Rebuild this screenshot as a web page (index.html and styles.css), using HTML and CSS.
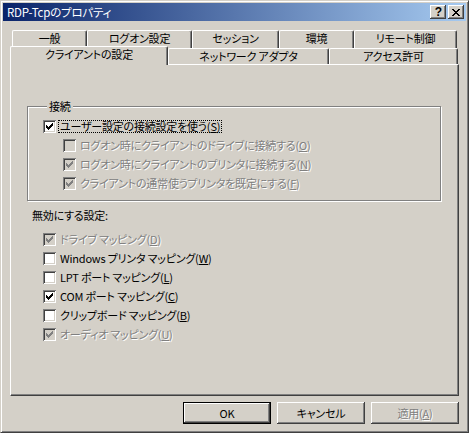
FILE: index.html
```html
<!DOCTYPE html>
<html lang="ja">
<head>
<meta charset="utf-8">
<title>RDP-Tcpのプロパティ</title>
<link rel="stylesheet" href="styles.css">
</head>
<body>
<div class="window">
  <div class="titlebar">
    <span class="title">RDP-Tcpのプロパティ</span>
    <span class="tbtn help">?</span>
    <span class="tbtn close"><svg width="8" height="7" viewBox="0 0 8 7"><path d="M0 0h2v1H0zM6 0h2v1H6zM1 1h2v1H1zM5 1h2v1H5zM2 2h4v1H2zM3 3h2v1H3zM2 4h4v1H2zM1 5h2v1H1zM5 5h2v1H5zM0 6h2v1H0zM6 6h2v1H6z"/></svg></span>
  </div>
  <div class="content">
    <div class="tabrow row1">
      <div class="tab w-a">一般</div>
      <div class="tab w-b">ログオン設定</div>
      <div class="tab w-c">セッション</div>
      <div class="tab w-d">環境</div>
      <div class="tab w-e">リモート制御</div>
    </div>
    <div class="tabrow row2">
      <div class="tab sel w-f">クライアントの設定</div>
      <div class="tab w-g">ネットワーク アダプタ</div>
      <div class="tab w-h">アクセス許可</div>
    </div>
    <div class="panel">
      <fieldset class="group">
        <legend>接続</legend>
        <div class="rows first">
          <div class="row">
            <span class="cb"><svg class="ck" viewBox="0 0 13 13" width="13" height="13"><path d="M3 5h1v3H3zM4 6h1v3H4zM5 7h1v3H5zM6 6h1v3H6zM7 5h1v3H7zM8 4h1v3H8zM9 3h1v3H9z"/></svg></span>
            <span class="lbl focus">ユーザー設定の接続設定を使う(<u>S</u>)</span>
          </div>
          <div class="row sub">
            <span class="cb dis"></span>
            <span class="lbl dis">ログオン時にクライアントのドライブに接続する(<u>O</u>)</span>
          </div>
          <div class="row sub">
            <span class="cb dis"><svg class="ck" viewBox="0 0 13 13" width="13" height="13"><path d="M3 5h1v3H3zM4 6h1v3H4zM5 7h1v3H5zM6 6h1v3H6zM7 5h1v3H7zM8 4h1v3H8zM9 3h1v3H9z"/></svg></span>
            <span class="lbl dis">ログオン時にクライアントのプリンタに接続する(<u>N</u>)</span>
          </div>
          <div class="row sub">
            <span class="cb dis"><svg class="ck" viewBox="0 0 13 13" width="13" height="13"><path d="M3 5h1v3H3zM4 6h1v3H4zM5 7h1v3H5zM6 6h1v3H6zM7 5h1v3H7zM8 4h1v3H8zM9 3h1v3H9z"/></svg></span>
            <span class="lbl dis">クライアントの通常使うプリンタを既定にする(<u>F</u>)</span>
          </div>
        </div>
      </fieldset>
      <div class="heading">無効にする設定:</div>
      <div class="rows second">
        <div class="row">
          <span class="cb dis"><svg class="ck" viewBox="0 0 13 13" width="13" height="13"><path d="M3 5h1v3H3zM4 6h1v3H4zM5 7h1v3H5zM6 6h1v3H6zM7 5h1v3H7zM8 4h1v3H8zM9 3h1v3H9z"/></svg></span>
          <span class="lbl dis">ドライブ マッピング(<u>D</u>)</span>
        </div>
        <div class="row">
          <span class="cb"></span>
          <span class="lbl">Windows プリンタ マッピング(<u>W</u>)</span>
        </div>
        <div class="row">
          <span class="cb"></span>
          <span class="lbl">LPT ポート マッピング(<u>L</u>)</span>
        </div>
        <div class="row">
          <span class="cb"><svg class="ck" viewBox="0 0 13 13" width="13" height="13"><path d="M3 5h1v3H3zM4 6h1v3H4zM5 7h1v3H5zM6 6h1v3H6zM7 5h1v3H7zM8 4h1v3H8zM9 3h1v3H9z"/></svg></span>
          <span class="lbl">COM ポート マッピング(<u>C</u>)</span>
        </div>
        <div class="row">
          <span class="cb"></span>
          <span class="lbl">クリップボード マッピング(<u>B</u>)</span>
        </div>
        <div class="row">
          <span class="cb dis"><svg class="ck" viewBox="0 0 13 13" width="13" height="13"><path d="M3 5h1v3H3zM4 6h1v3H4zM5 7h1v3H5zM6 6h1v3H6zM7 5h1v3H7zM8 4h1v3H8zM9 3h1v3H9z"/></svg></span>
          <span class="lbl dis">オーディオ マッピング(<u>U</u>)</span>
        </div>
      </div>
    </div>
    <div class="buttons">
      <div class="btn default">OK</div>
      <div class="btn">キャンセル</div>
      <div class="btn dis">適用(<u>A</u>)</div>
    </div>
  </div>
</div>
</body>
</html>
```
FILE: styles.css
```css
* { box-sizing: border-box; }
html, body { margin: 0; padding: 0; }
body {
  width: 469px;
  height: 433px;
  overflow: hidden;
  background: #d4d0c8;
  font-family: "Noto Sans CJK JP", "Noto Sans", sans-serif;
  font-size: 11px;
  letter-spacing: -0.2px;
  font-feature-settings: "palt";
  color: #000;
}
.window {
  width: 469px;
  height: 433px;
  border: 1px solid;
  border-color: #d4d0c8 #404040 #404040 #d4d0c8;
  box-shadow: inset 1px 1px #fff, inset -1px -1px #808080;
  padding: 2px;
  display: flex;
  flex-direction: column;
}
.titlebar {
  height: 18px;
  background: linear-gradient(to right, #0a246a, #a6caf0);
  display: flex;
  align-items: center;
  padding: 0 2px;
  color: #fff;
}
.title {
  flex: 1;
  line-height: 18px;
  padding-left: 2px;
  white-space: nowrap;
  font-size: 11.5px;
}
.tbtn {
  width: 16px;
  height: 14px;
  background: #d4d0c8;
  box-shadow: inset -1px -1px #404040, inset 1px 1px #fff, inset -2px -2px #808080;
  display: flex;
  align-items: center;
  justify-content: center;
  color: #000;
}
.tbtn + .tbtn { margin-left: 2px; }
.help {
  font-family: "Liberation Sans", sans-serif;
  font-weight: bold;
  font-size: 12px;
  letter-spacing: 0;
  line-height: 14px;
  padding-left: 1px;
}
.close svg { display: block; shape-rendering: crispEdges; fill: #000; margin-left: -1px; }

.content {
  padding: 9px 7px 0 7px;
  display: flex;
  flex-direction: column;
}
.tabrow { display: flex; }
.row1 { height: 18px; margin-left: 2px; }
.row2 { height: 16px; align-items: flex-start; }
.tab {
  height: 100%;
  flex: none;
  border-left: 1px solid #fff;
  border-top: 1px solid #fff;
  border-right: 1px solid #404040;
  box-shadow: inset -1px 0 #808080;
  border-radius: 2px 2px 0 0;
  text-align: center;
  white-space: nowrap;
  background: #d4d0c8;
}
.row1 .tab { line-height: 15px; }
.row2 .tab { line-height: 15px; }
.row2 .tab.sel {
  height: 19px;
  margin-top: -2px;
  line-height: 14px;
  position: relative;
  z-index: 1;
}
.w-a { width: 75px; }
.w-b { width: 105px; }
.w-c { width: 87px; }
.w-d { width: 75px; }
.w-e { width: 103px; }
.w-f { width: 158px; }
.w-g { width: 161px; }
.w-h { width: 129px; }

.panel {
  height: 332px;
  border: 1px solid;
  border-color: #fff #404040 #404040 #fff;
  box-shadow: inset -1px -1px #808080;
  padding: 34px 17px 0 16px;
}
.group {
  margin: 0;
  padding: 0 0 10px 15px;
  border: 1px solid #808080;
  box-shadow: inset 1px 1px #fff, 1px 1px #fff;
  min-width: 0;
}
.group legend {
  padding: 0 2px;
  margin-left: 4px;
  line-height: 14px;
  background: #d4d0c8;
}
.rows {
  display: flex;
  flex-direction: column;
  gap: 6px;
}
.rows.first { padding-top: 7px; }
.rows.second { padding-left: 16px; margin-top: 11px; }
.heading {
  margin: 7px 0 0 5px;
  line-height: 14px;
}
.row {
  display: flex;
  align-items: center;
  height: 13px;
}
.row.sub { margin-left: 20px; }
.cb {
  width: 13px;
  height: 13px;
  flex: none;
  background: #fff;
  color: #000;
  box-shadow: inset 1px 1px #808080, inset -1px -1px #fff, inset 2px 2px #404040, inset -2px -2px #d4d0c8;
}
.cb.dis { background: #d4d0c8; color: #808080; }
.ck { display: block; fill: currentColor; shape-rendering: crispEdges; }
.lbl {
  margin-left: 4px;
  line-height: 13px;
  white-space: nowrap;
}
.lbl.focus {
  margin-left: 2px;
  padding: 0 1px;
  line-height: 11px;
  border: 1px dotted #000;
}
.dis { color: #808080; text-shadow: 1px 1px 0 #fff; }
u { text-decoration: underline; text-underline-offset: 1px; }

.buttons {
  display: flex;
  justify-content: flex-end;
  gap: 6px;
  margin-top: 6px;
}
.btn {
  width: 88px;
  height: 22px;
  line-height: 22px;
  text-align: center;
  box-shadow: inset -1px -1px #404040, inset 1px 1px #fff, inset -2px -2px #808080, inset 2px 2px #d4d0c8;
}
.btn.default {
  border: 1px solid #000;
  line-height: 20px;
}
```
